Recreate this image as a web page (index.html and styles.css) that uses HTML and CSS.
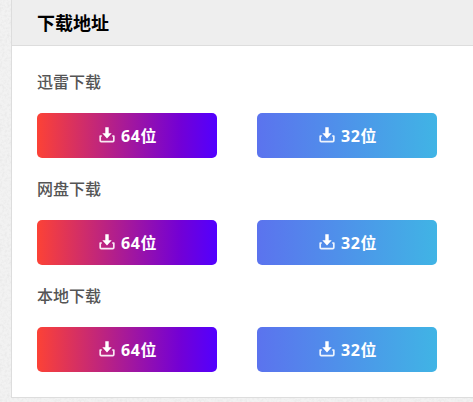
FILE: index.html
```
<!DOCTYPE html>
<html lang="zh-CN">
<head>
    <meta charset="UTF-8">
    <meta name="viewport" content="width=device-width, initial-scale=1.0">
    <title>下载地址</title>
    <link rel="stylesheet" href="styles.css">
</head>
<body>
    <svg class="sprite" aria-hidden="true">
        <symbol id="icon-download" viewBox="0 0 16 16">
            <path d="M6.3 0.2h3.4v6h3L8 11.6 3.3 6.2h3z" fill="currentColor"/>
            <path d="M2.8 9H1.2v4.6q0 1 1 1h11.6q1 0 1-1V9h-1.6" fill="none" stroke="currentColor" stroke-width="1.7" stroke-linejoin="round" opacity=".9"/>
        </symbol>
    </svg>
    <div class="panel">
        <h2 class="panel-title">下载地址</h2>
        <div class="panel-body">
            <div class="group">
                <h3 class="group-title">迅雷下载</h3>
                <div class="buttons">
                    <a class="btn btn-64" href="#"><svg class="icon"><use href="#icon-download"/></svg>64位</a>
                    <a class="btn btn-32" href="#"><svg class="icon"><use href="#icon-download"/></svg>32位</a>
                </div>
            </div>
            <div class="group">
                <h3 class="group-title">网盘下载</h3>
                <div class="buttons">
                    <a class="btn btn-64" href="#"><svg class="icon"><use href="#icon-download"/></svg>64位</a>
                    <a class="btn btn-32" href="#"><svg class="icon"><use href="#icon-download"/></svg>32位</a>
                </div>
            </div>
            <div class="group">
                <h3 class="group-title">本地下载</h3>
                <div class="buttons">
                    <a class="btn btn-64" href="#"><svg class="icon"><use href="#icon-download"/></svg>64位</a>
                    <a class="btn btn-32" href="#"><svg class="icon"><use href="#icon-download"/></svg>32位</a>
                </div>
            </div>
        </div>
    </div>
</body>
</html>
```
FILE: styles.css
```
* {
    margin: 0;
    padding: 0;
    box-sizing: border-box;
}

body {
    min-height: 402px;
    overflow: hidden;
    padding-left: 11px;
    font-family: "Open Sans", "Noto Sans CJK SC", sans-serif;
    /* 细颗粒纸纹背景 */
    background: #f2f2f2 url("data:image/svg+xml,%3Csvg xmlns='http://www.w3.org/2000/svg' width='120' height='120'%3E%3Cfilter id='n'%3E%3CfeTurbulence type='fractalNoise' baseFrequency='.4' numOctaves='2' stitchTiles='stitch'/%3E%3CfeColorMatrix values='0 0 0 0 .6 0 0 0 0 .6 0 0 0 0 .6 .5 0 0 0 -.2'/%3E%3C/filter%3E%3Crect width='120' height='120' filter='url(%23n)'/%3E%3C/svg%3E");
}

.sprite {
    display: none;
}

.panel {
    background: #fff;
    border-left: 1px solid #ddd;
    border-bottom: 1px solid #ddd;
}

.panel-title {
    height: 46px;
    padding-left: 25px;
    line-height: 46px;
    font-size: 18px;
    font-weight: 700;
    color: #000;
    background: #eee;
    border-bottom: 1px solid #ddd;
}

.panel-body {
    display: flex;
    flex-direction: column;
    gap: 19px;
    padding: 24px 25px 25px;
}

.group-title {
    margin-bottom: 19px;
    line-height: 24px;
    font-size: 16px;
    font-weight: 500;
    color: #555;
}

.buttons {
    display: flex;
    gap: 40px;
}

.btn {
    display: flex;
    flex: none;
    align-items: center;
    justify-content: center;
    gap: 6px;
    width: 180px;
    height: 45px;
    padding: 0 0 2px 2px;
    border-radius: 5px;
    font-size: 16px;
    font-weight: 700;
    letter-spacing: 0.6px;
    color: #fff;
    text-decoration: none;
}

.btn-64 {
    background: linear-gradient(90deg, #fc4236, #7200d6 80%, #5200ff);
}

.btn-32 {
    background: linear-gradient(90deg, #5b73ee, #40b4e5);
}

.icon {
    width: 16px;
    height: 16px;
    margin-top: 1px;
}
```
